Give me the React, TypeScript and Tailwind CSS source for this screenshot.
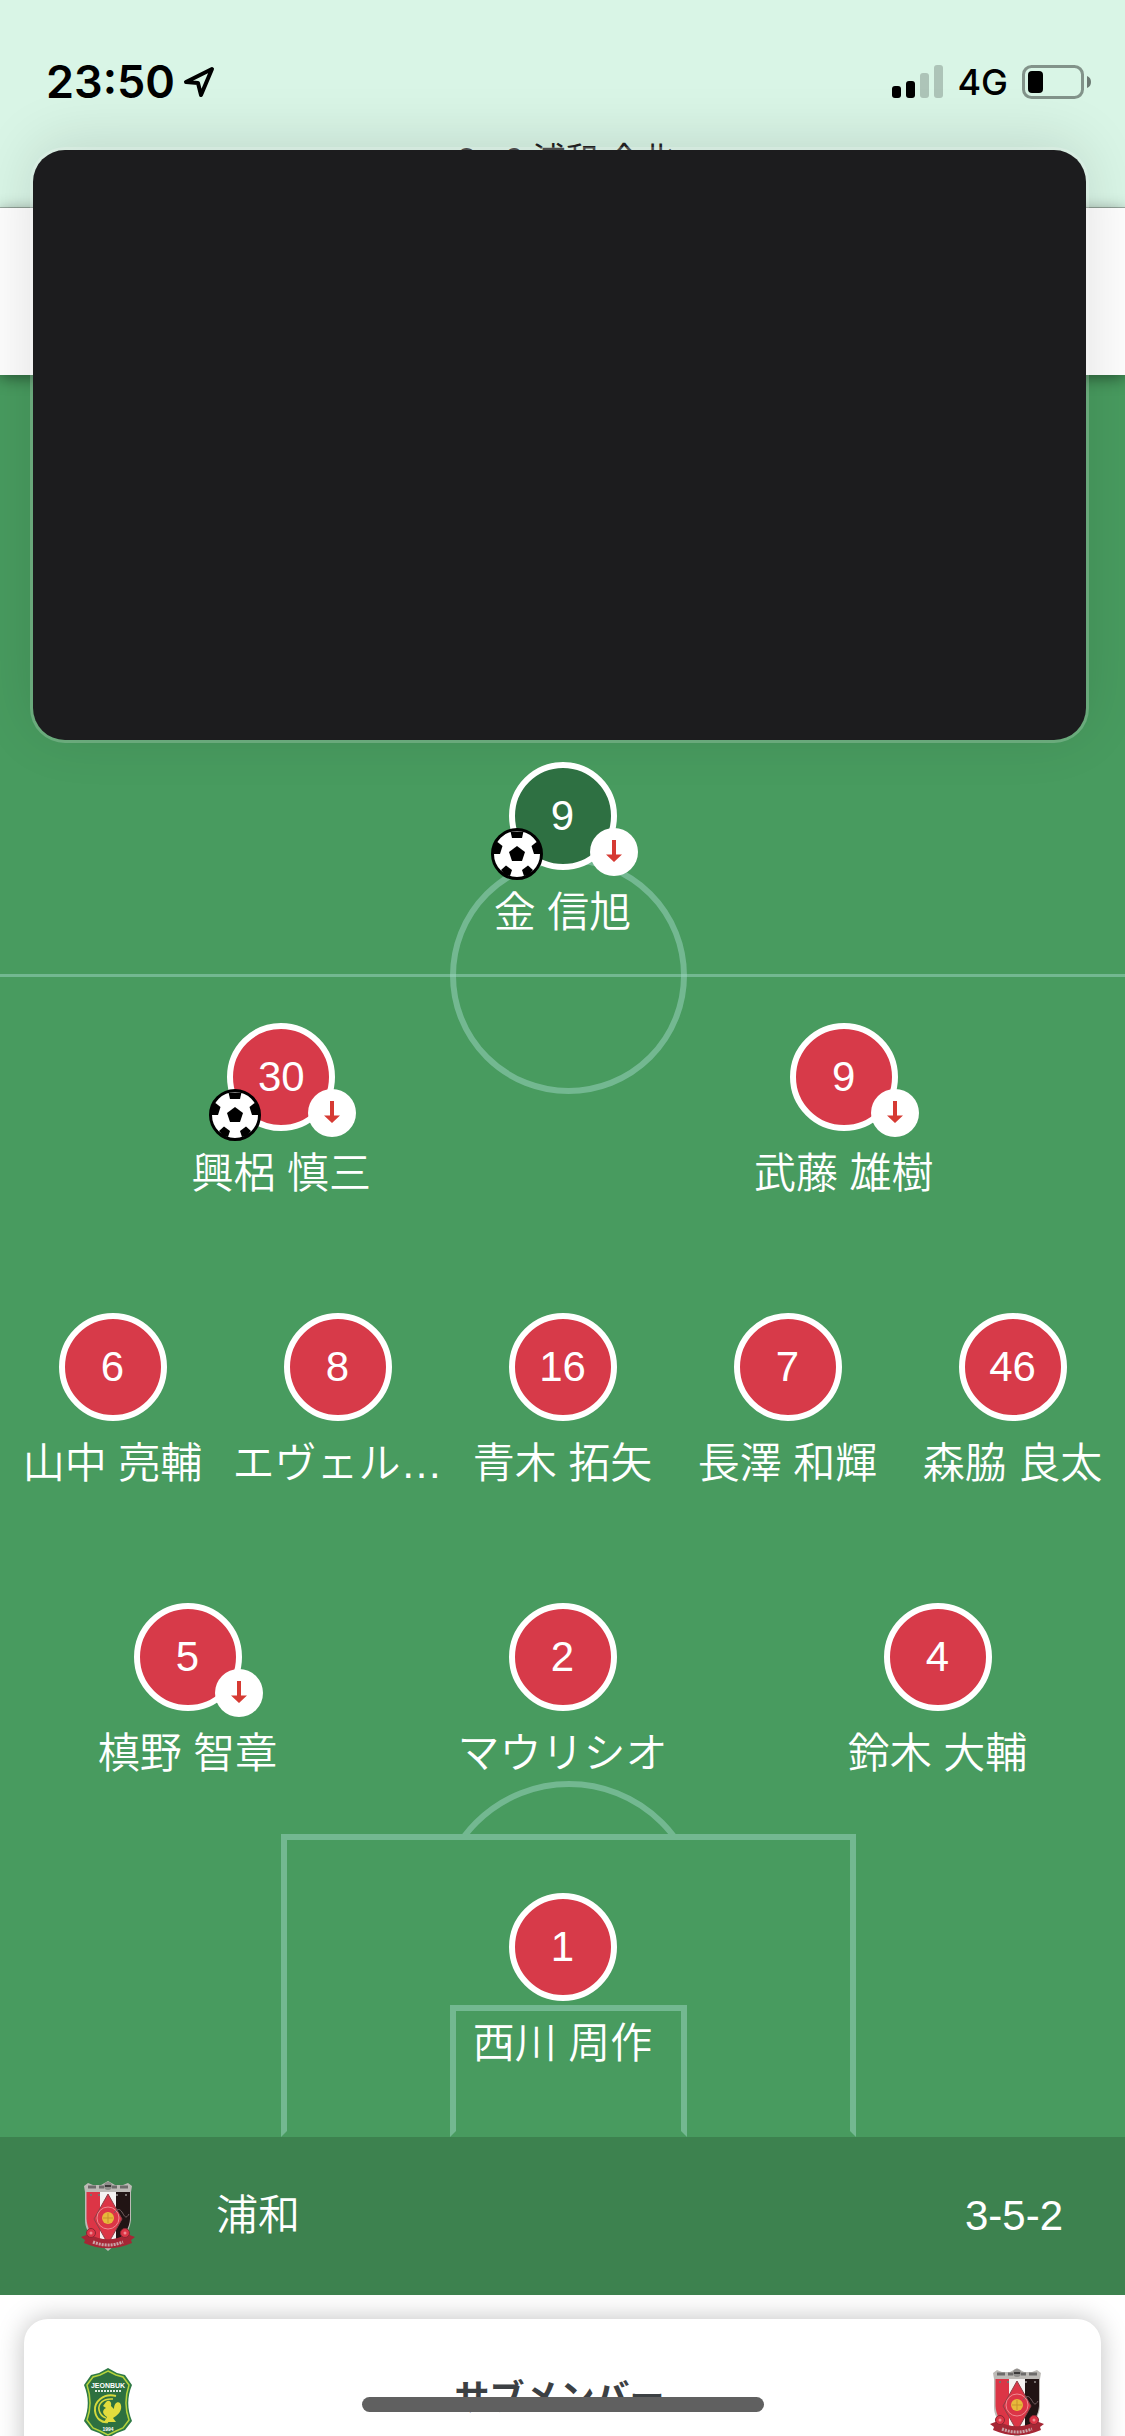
import { clsx } from "clsx";

interface Player {
  number: number;
  name: string;
  goal?: boolean;
  subbedOff?: boolean;
}

const awayForwards: Player[] = [{ number: 9, name: "金 信旭", goal: true, subbedOff: true }];

const homeLines: Player[][] = [
  [
    { number: 30, name: "興梠 慎三", goal: true, subbedOff: true },
    { number: 9, name: "武藤 雄樹", subbedOff: true },
  ],
  [
    { number: 6, name: "山中 亮輔" },
    { number: 8, name: "エヴェル…" },
    { number: 16, name: "青木 拓矢" },
    { number: 7, name: "長澤 和輝" },
    { number: 46, name: "森脇 良太" },
  ],
  [
    { number: 5, name: "槙野 智章", subbedOff: true },
    { number: 2, name: "マウリシオ" },
    { number: 4, name: "鈴木 大輔" },
  ],
  [{ number: 1, name: "西川 周作" }],
];

export default function App() {
  return (
    <div
      lang="ja"
      className="relative h-screen overflow-hidden bg-white font-['Liberation_Sans','Noto_Sans_CJK_JP',sans-serif]"
    >
      <header className="border-b border-[#a3b5aa] bg-[#d9f5e6]">
        <StatusBar />
        <h1 className="h-[75px] pl-1.5 text-center text-[33px] leading-[56px] text-[#222]">2 - 0 浦和 全北</h1>
      </header>

      {/* Empty tab strip, mostly behind the notification */}
      <div className="relative h-[167px] bg-[#fdfdfd] shadow-[0_3px_15px_rgba(0,0,0,0.45)]" />

      <main>
        <section className="bg-[#489b5f]">
          <div className="flex h-[600px] flex-col justify-end pb-[31px]">
            <PlayerLine players={awayForwards} away />
          </div>
          <div className="relative py-px">
            <PitchMarkings />
            {homeLines.map((players, i) => (
              <div key={i} className="relative h-[290px] pt-[47px]">
                <PlayerLine players={players} />
              </div>
            ))}
          </div>
        </section>

        <section className="flex items-center bg-[#3d824f] py-[43px] pr-[62px] pl-[72px] text-[42px] leading-[72px] text-white">
          <UrawaCrest />
          <h2 className="ml-[72px] flex-1 font-[350]">浦和</h2>
          <span>3-5-2</span>
        </section>

        <section className="mx-6 mt-6 flex items-start justify-between rounded-3xl bg-white px-12 py-12 shadow-[0_0_27px_rgba(0,0,0,0.25)]">
          <JeonbukCrest />
          <h2 className="pr-1.5 text-[35px] leading-[62px] font-bold text-[#3c4043]">サブメンバー</h2>
          <UrawaCrest />
        </section>
      </main>

      {/* Notification */}
      <div className="absolute top-[150px] right-[39px] left-[33px] h-[590px] rounded-[32px] bg-[#1c1c1e] shadow-[0_0_0_3px_rgba(255,255,255,0.2),0_-8px_60px_rgba(0,0,0,0.12)]" />

      {/* Home indicator */}
      <div className="absolute inset-x-0 bottom-6 flex justify-center">
        <div className="h-[15px] w-[402px] rounded-full bg-[#606060]" />
      </div>
    </div>
  );
}

function StatusBar() {
  return (
    <div className="flex h-[132px] items-center justify-between pt-[31px] pr-[33px] pl-[46px] font-['Inter',sans-serif] text-black">
      <div className="flex items-center gap-2">
        <time className="text-[45px] leading-none font-semibold">23:50</time>
        <svg viewBox="0 0 32 32" className="h-8 w-8" fill="none" stroke="black" strokeWidth="4" strokeLinejoin="round">
          <path d="M29 3 3 16l12 1 3 12Z" />
        </svg>
      </div>
      <div className="flex items-center gap-3.5">
        <svg viewBox="0 0 51 33" className="h-[33px] w-[51px]">
          <rect x="0" y="21" width="9" height="12" rx="3" />
          <rect x="14" y="16" width="9" height="17" rx="3" />
          <rect x="28" y="8" width="9" height="25" rx="3" opacity="0.2" />
          <rect x="42" y="0" width="9" height="33" rx="3" opacity="0.2" />
        </svg>
        <span className="text-[36px] leading-none font-medium">4G</span>
        <svg viewBox="0 0 70 34" className="h-[34px] w-[70px]">
          <rect x="1.500" y="1.500" width="59" height="31" rx="8" fill="none" stroke="black" strokeWidth="3" opacity="0.4" />
          <rect x="6" y="6" width="15" height="22" rx="4" />
          <path d="M65 11a6.500 6.500 0 0 1 0 12z" opacity="0.5" />
        </svg>
      </div>
    </div>
  );
}

function PitchMarkings() {
  return (
    <div className="absolute inset-0">
      <div className="absolute inset-x-0 -top-px h-[3px] bg-[#9ed5c3]/50" />
      {/* Centre circle */}
      <div className="absolute -top-[118px] left-[40%] h-[237px] w-[calc(20%+12px)] rounded-full border-6 border-[#9ed5c3]/50" />
      {/* Penalty arc, only the cap above the box */}
      <div className="absolute bottom-[303px] left-[40%] flex h-[53px] w-[calc(20%+12px)] justify-center overflow-hidden">
        <div className="h-[268px] w-[268px] shrink-0 rounded-full border-6 border-[#9ed5c3]/50" />
      </div>
      <div className="absolute bottom-0 left-1/4 h-[303px] w-[calc(50%+12px)] border-6 border-[#9ed5c3]/50 border-b-transparent" />
      <div className="absolute bottom-0 left-[40%] h-[132px] w-[calc(20%+12px)] border-6 border-[#9ed5c3]/50 border-b-transparent" />
    </div>
  );
}

function PlayerLine({ players, away = false }: { players: Player[]; away?: boolean }) {
  return (
    <ul className="relative z-[1] flex">
      {players.map((player) => (
        <li key={player.name} className="flex min-w-0 flex-1 flex-col items-center gap-[11px] text-[42px] text-white">
          <div
            className={clsx(
              "relative flex h-[108px] w-[108px] items-center justify-center rounded-full border-6 border-white",
              away ? "bg-[#2e7042]" : "bg-[#d73a49]"
            )}
          >
            <span className="leading-none">{player.number}</span>
            {player.goal && <GoalBadge />}
            {player.subbedOff && <SubbedOffBadge />}
          </div>
          <span className="leading-[63px] font-[350] whitespace-nowrap">{player.name}</span>
        </li>
      ))}
    </ul>
  );
}

function GoalBadge() {
  return (
    <svg viewBox="0 0 52 52" className="absolute -bottom-4 -left-6 h-[52px] w-[52px]">
      <circle cx="26" cy="26" r="24.500" fill="white" stroke="black" strokeWidth="3" />
      <path d="M26 18l8 6-3 9H21l-3-9z" />
      <path d="M19.500 3.500h13L31 10H21z" />
      <path d="M3 17l3.500-3 5 4-2.500 8H3z" />
      <path d="M49 17l-3.500-3-5 4 2.500 8h6z" />
      <path d="M10 42l5-4.500 6 4.500-2 6-5-1z" />
      <path d="M42 42l-5-4.500-6 4.500 2 6 5-1z" />
    </svg>
  );
}

function SubbedOffBadge() {
  return (
    <svg viewBox="0 0 48 48" className="absolute -right-[27px] -bottom-3 h-12 w-12">
      <circle cx="24" cy="24" r="24" fill="white" />
      <path d="M22 12h4v14.500h6L24 34l-8-7.500h6z" fill="#d63a33" />
    </svg>
  );
}

function UrawaCrest() {
  return (
    <svg viewBox="0 0 72 72" className="h-[72px] w-[72px]">
      <path d="M12 6l4-3 5 2h8l7-4 7 4h8l5-2 4 3-1 6v28c-1 8-4 13-7 17L36 71 20 57c-4-5-7-10-7-17V12z" fill="#bdbab6" />
      <path d="M16 7h8M27 7h5M40 7h5M48 7h8" stroke="#6d6b6a" strokeWidth="3" />
      <circle cx="36" cy="6" r="4" fill="#8f8d8b" />
      <path d="M33 6h6" stroke="#3c3a3a" strokeWidth="2" />
      <path d="M14.500 12H28v49c-9-4-13-14-13.500-22z" fill="#dc3546" />
      <path d="M28 12h17v46l-9 5-8-5z" fill="#f6f3f2" />
      <path d="M44 12h14v27c-.5 8-5 18-14 21z" fill="#211414" />
      <path d="M18 15h2M26 15h2M44 15h2M53 15h2" stroke="#77706e" strokeWidth="2" />
      <path d="M36 14l14 25-14 25-14-25z" fill="#dc3546" stroke="#8d4148" strokeWidth="1" />
      <circle cx="36" cy="38" r="11" fill="none" stroke="#ef8a92" strokeWidth="1" />
      <path d="M42 33c9-12 9 12 15 1" fill="none" stroke="#776163" strokeWidth="1" />
      <circle cx="36" cy="38" r="6" fill="#e8b93a" />
      <path d="M31 38h10M36 33v10" stroke="#c9912c" strokeWidth="1" />
      <path d="M9 57l8-3c12 7 26 7 38 0l8 3-4 3 1 3c-16 7-32 7-48 0l1-3z" fill="#a52735" />
      <path d="M21 62c10 4 20 4 30 0" fill="none" stroke="#c9a3a7" strokeWidth="3" strokeDasharray="2 1" />
      <circle cx="19" cy="53" r="4.500" fill="#dc3546" stroke="#8a2632" />
      <circle cx="53" cy="53" r="4.500" fill="#dc3546" stroke="#8a2632" />
      <circle cx="19" cy="53" r="1.500" fill="#ef8a92" />
      <circle cx="53" cy="53" r="1.500" fill="#ef8a92" />
    </svg>
  );
}

function JeonbukCrest() {
  return (
    <svg viewBox="0 0 72 72" className="h-[72px] w-[72px]">
      <path
        d="M36 1l9 5 8 2 7 10c-5 12-5 24 0 36l-7 9-8 3-9 5-9-5-8-3-7-9c5-12 5-24 0-36l7-10 8-2z"
        fill="#2f7a45"
      />
      <path
        d="M36 4l8 4 7 2 6 8c-4 12-4 24 0 35l-6 8-7 3-8 4-8-4-7-3-6-8c4-11 4-23 0-35l6-8 7-2z"
        fill="#2d7040"
        stroke="#b5d33d"
        strokeWidth="1.500"
      />
      <text x="36" y="21" textAnchor="middle" className="fill-white text-[7px] font-bold">
        JEONBUK
      </text>
      <path d="M23 24h26" stroke="#dbe9df" strokeWidth="2" strokeDasharray="2 1" />
      <path d="M44 29c-13-3-22 6-21 15 1 8 7 12 13 11" fill="none" stroke="#d6d93c" strokeWidth="2" />
      <path d="M41 32c-10-1-15 5-14 11 1 5 4 7 7 8" fill="none" stroke="#d6d93c" strokeWidth="1.500" />
      <path d="M34 35c3-3 6 0 5 4l3 3c0-5 3-8 6-6 3 5 0 10-4 13l-3 2 3 4H32l3-5c-5-3-5-7-1-9l-3-2z" fill="#e3dc3d" />
      <text x="36" y="64" textAnchor="middle" className="fill-white text-[5px] font-bold">
        1994
      </text>
    </svg>
  );
}
